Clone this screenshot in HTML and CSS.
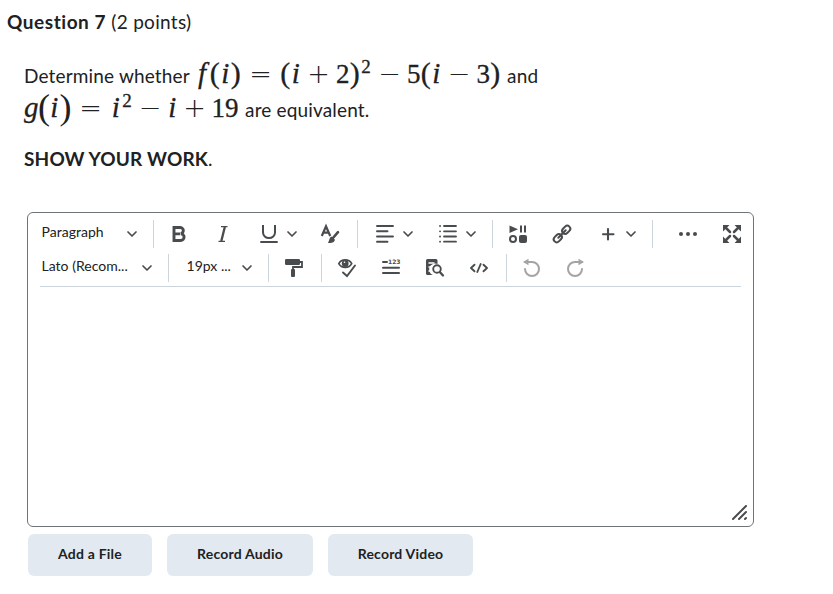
FILE: index.html
```html
<!DOCTYPE html>
<html lang="en">
<head>
	<meta charset="UTF-8">
	<title>Question 7</title>
	<meta name="viewport" content="width=device-width,initial-scale=1">
	<link rel="stylesheet" href="styles.css">
</head>
<body>
	<!-- shared chevron -->
	<svg class="defs" width="0" height="0">
		<symbol id="chev" viewBox="0 0 12 12"><path d="M2 4l4 4 4-4" fill="none" stroke="#494c4e" stroke-width="1.7" stroke-linecap="round" stroke-linejoin="round"/></symbol>
	</svg>
	<h2 class="title"><b>Question 7</b> (2 points)</h2>
	<div class="question">
		<div class="line">Determine whether <span class="math"><i class="fn">f</i><span class="p">(</span><i>i</i><span class="p">)</span><span class="op first">=</span><span class="p">(</span><i>i</i><span class="op">+</span><span class="n">2</span><span class="p">)</span><sup>2</sup><span class="op">−</span><span class="n">5</span><span class="p">(</span><i>i</i><span class="op">−</span><span class="n">3</span><span class="p">)</span></span> and</div>
		<div class="line"><span class="math"><i class="g">g</i><span class="p big">(</span><i>i</i><span class="p big">)</span><span class="op wide">=</span><i>i</i><sup>2</sup><span class="op">−</span><i>i</i><span class="op">+</span><span class="n">1</span><span class="n">9</span></span> are equivalent.</div>
		<p class="work"><b>SHOW YOUR WORK</b>.</p>
	</div>

	<div class="editor">
		<div class="toolbar">
			<div class="row">
				<div class="select para"><span>Paragraph</span><svg class="chev"><use href="#chev"/></svg></div>
				<div class="sep"></div>
				<div class="tool"><svg viewBox="0 0 18 18"><path d="M4 2.500h5.700a2.900 2.900 0 0 1 1 6.200A3.200 3.200 0 0 1 10.700 15.500H4zM5 8.900h5" fill="none" stroke="#494c4e" stroke-width="2.900"/></svg></div>
				<div class="tool"><svg viewBox="0 0 18 18"><path d="M7 1.700h6.500M4.500 16.300H11" fill="none" stroke="#494c4e" stroke-width="1.300"/><path d="M10.800 2L7.300 16" stroke="#494c4e" stroke-width="2.300"/></svg></div>
				<div class="tool split"><svg viewBox="0 0 18 18"><path d="M3 0v7.500a6 5.500 0 0 0 12 0V0" fill="none" stroke="#494c4e" stroke-width="2"/><path d="M1 17h16" stroke="#494c4e" stroke-width="1.900" stroke-linecap="round"/></svg><svg class="chev"><use href="#chev"/></svg></div>
				<div class="tool"><svg viewBox="0 0 18 18"><path d="M.8 11L5 1.200 9.200 11M2.300 7.700h5.400" fill="none" stroke="#494c4e" stroke-width="2.200"/><path d="M17 7.200L11.500 13.500" stroke="#494c4e" stroke-width="2.600" stroke-linecap="round"/><path d="M10.300 11.500l3.700 3.300c-.8 3.200-4 3.700-7.200 3 1.500-1 1.200-5 3.500-6.300z" fill="#494c4e"/></svg></div>
				<div class="sep"></div>
				<div class="tool split"><svg viewBox="0 0 18 18"><path d="M1 1h16M1 6.300h10.500M1 11.500h16M1 16.700h10.500" stroke="#494c4e" stroke-width="1.900" stroke-linecap="round"/></svg><svg class="chev"><use href="#chev"/></svg></div>
				<div class="tool split"><svg viewBox="0 0 18 18"><path d="M5 1h12M5 6.300h12M5 11.500h12M5 16.700h12M1 1h.1M1 6.300h.1M1 11.500h.1M1 16.700h.1" stroke="#494c4e" stroke-width="1.800" stroke-linecap="round"/></svg><svg class="chev"><use href="#chev"/></svg></div>
				<div class="sep"></div>
				<div class="tool"><svg viewBox="0 0 18 18"><path d="M.5.500L9 4.300.5 8zM11 .5h2v7h-2zM15 .5h2v7h-2z" fill="#494c4e"/><rect x="10" y="10" width="8" height="8" rx="2" fill="#494c4e"/><circle cx="4" cy="14" r="3" fill="none" stroke="#494c4e" stroke-width="2"/></svg></div>
				<div class="tool"><svg viewBox="0 0 18 18"><g fill="none" stroke="#494c4e" stroke-width="2"><rect x="-4.500" y="-3" width="9" height="6" rx="3" transform="translate(13.200 4.800) rotate(-45)"/><rect x="-4.500" y="-3" width="9" height="6" rx="3" transform="translate(4.800 13.200) rotate(-45)"/><path d="M5.300 12.700l7.400-7.400" stroke-linecap="round"/></g></svg></div>
				<div class="tool split"><svg viewBox="0 0 18 18"><path d="M9 4v10.500M4 9.200h10.500" stroke="#494c4e" stroke-width="2.100" stroke-linecap="round"/></svg><svg class="chev"><use href="#chev"/></svg></div>
				<div class="sep"></div>
				<div class="tool more"><svg viewBox="0 0 18 18"><g fill="#494c4e"><circle cx="2" cy="9" r="2"/><circle cx="9" cy="9" r="2"/><circle cx="16" cy="9" r="2"/></g></svg></div>
				<div class="tool"><svg viewBox="0 0 18 18"><path d="M0 0h6.500L0 6.500zM18 0v6.500L11.500 0zM0 18v-6.500L6.500 18zM18 18h-6.500L18 11.500z" fill="#494c4e"/><path d="M2 2l5 5M16 2l-5 5M2 16l5-5M16 16l-5-5" stroke="#494c4e" stroke-width="2.500" stroke-linecap="round"/></svg></div>
			</div>
			<div class="row">
				<div class="select font"><span>Lato (Recom...</span><svg class="chev"><use href="#chev"/></svg></div>
				<div class="sep"></div>
				<div class="select size"><span>19px ...</span><svg class="chev"><use href="#chev"/></svg></div>
				<div class="sep"></div>
				<div class="tool"><svg viewBox="0 0 18 18"><rect y="0" width="15" height="6" rx="1.200" fill="#494c4e"/><path d="M15 3h2v5H8v3" fill="none" stroke="#494c4e" stroke-width="1.800"/><rect x="6" y="10" width="4" height="8" rx="1" fill="#494c4e"/></svg></div>
				<div class="sep"></div>
				<div class="tool"><svg viewBox="0 0 18 18"><path d="M.8 4.700C3.500-.3 11-.3 13.700 4.700 11 9.700 3.500 9.700.8 4.700z" fill="none" stroke="#494c4e" stroke-width="1.700"/><circle cx="7.200" cy="4.500" r="3.400" fill="#494c4e"/><circle cx="6.500" cy="3.300" r=".8" fill="#fff"/><path d="M5 13.500l4 3.500 8-10.500" fill="none" stroke="#494c4e" stroke-width="1.900" stroke-linecap="round"/></svg></div>
				<div class="tool"><svg viewBox="0 0 18 18"><path d="M1 3h4M1 8.700h16M1 14h16" stroke="#494c4e" stroke-width="2" stroke-linecap="round"/><text x="6" y="5" class="digits">123</text></svg></div>
				<div class="tool"><svg viewBox="0 0 18 18"><path d="M1.500 0h8.500a1.500 1.500 0 0 1 1.500 1.500V5a5.500 5.500 0 0 0-4.800 11H1.500A1.500 1.500 0 0 1 0 14.500v-13A1.500 1.500 0 0 1 1.500 0z" fill="#494c4e"/><path d="M2.500 4h6M2.500 8h3M2.500 12h3" stroke="#fff" stroke-width="1.500"/><circle cx="11" cy="10" r="3.800" fill="#fff" stroke="#494c4e" stroke-width="1.900"/><path d="M13.800 13L17 16.500" stroke="#494c4e" stroke-width="2.300" stroke-linecap="round"/></svg></div>
				<div class="tool"><svg viewBox="0 0 18 18"><path d="M4.500 5.700L1 9l3.500 3.300M13.500 5.700L17 9l-3.500 3.300M10.700 5L7.300 13" fill="none" stroke="#494c4e" stroke-width="1.900" stroke-linecap="round" stroke-linejoin="round"/></svg></div>
				<div class="sep"></div>
				<div class="tool off"><svg viewBox="0 0 18 18"><path d="M2 3h7a7 7 0 1 1-7 7" fill="none" stroke="#494c4e" stroke-width="2" stroke-linecap="round"/><path d="M0 3l5.500-3.200v6.400z" fill="#494c4e"/></svg></div>
				<div class="tool off redo"><svg viewBox="0 0 18 18"><path d="M16 3H9a7 7 0 1 0 7 7" fill="none" stroke="#494c4e" stroke-width="2" stroke-linecap="round"/><path d="M18 3l-5.500-3.200v6.400z" fill="#494c4e"/></svg></div>
			</div>
		</div>
		<div class="content"></div>
		<svg class="grip" viewBox="0 0 16 16"><path d="M1 15L14 2M7 15l7-7M13 15l1-1" stroke="#494c4e" stroke-width="2" stroke-linecap="round"/></svg>
	</div>

	<div class="buttons">
		<button class="file">Add a File</button>
		<button class="audio">Record Audio</button>
		<button class="video">Record Video</button>
	</div>
</body>
</html>
```
FILE: styles.css
```css
*{box-sizing: border-box;}
body{margin: 0;background: #fff;color: #202122;font-family: Lato, "Liberation Sans", sans-serif;font-size: 19px;}
.defs{display: block;}
.title{margin: 0;padding: 8px 0 0 7px;font-size: 19px;font-weight: 400;line-height: 28px;height: 58px;letter-spacing: .3px;}
.title b{letter-spacing: .55px;}
.question{padding-left: 24px;height: 154px;letter-spacing: .16px;}
.line{height: 34px;line-height: 36px;white-space: nowrap;}
.work{margin: 0;padding-top: 19px;line-height: 28px;}

/* formulas */
.math{margin-right: 1.5px;font-family: "Liberation Serif", serif;font-size: 27px;line-height: 1px;letter-spacing: 0;-webkit-text-stroke: .3px #202122;}
.math i,.math span,.math sup{display: inline-block;text-align: center;}
.math i{width: 10.5px;font-size: 29px;}
.math .fn{width: 15px;}
.math .g{width: 14px;}
.math .p{width: 10.5px;font-size: 30px;}
.math .big{width: 11px;font-size: 36px;vertical-align: -2px;-webkit-text-stroke: 0;}
.math .n{width: 13.5px;}
.math .op{width: 35px;font-family: "DejaVu Sans", sans-serif;font-weight: 200;font-size: 27px;-webkit-text-stroke: 0;}
.math .first{width: 39px;}
.math .wide{width: 40px;}
.math sup{width: 12px;font-size: 19px;vertical-align: 10px;}
.line + .line .op:not(.wide){width: 34px;}

/* editor */
.editor{position: relative;margin-left: 27px;width: 727px;height: 315px;border: 1px solid #6e7477;border-radius: 6px;}
.toolbar{margin: 0 12px;padding: 7px 0 4px;border-bottom: 1px solid #cdd5dc;display: flex;flex-direction: column;gap: 6px;}
.row{display: flex;align-items: center;height: 28px;}
.row svg{display: block;width: 18px;height: 18px;overflow: visible;flex: none;}
.row .chev{width: 12px;height: 12px;}
.sep{width: 1px;height: 28px;background: #cdd5dc;margin: 0 3px 0 5px;flex: none;}
.tool{padding: 0 13px;flex: none;}
.split{display: flex;align-items: center;gap: 8px;padding: 0 10px 0 15px;}
.more{margin-left: 10px;}
.off{opacity: .5;}
.redo{margin-left: -1px;}
.select{display: flex;align-items: center;justify-content: space-between;padding: 0 10px 0 1.5px;font-size: 14px;letter-spacing: .02px;white-space: nowrap;flex: none;}
.select span{padding-bottom: 5px;}
.para{width: 108px;}
.font{width: 123px;}
.size{width: 91px;padding-left: 14.5px;}
.digits{font: bold 6px "DejaVu Sans", sans-serif;fill: #494c4e;}
.grip{position: absolute;right: 5px;bottom: 6px;width: 16px;height: 16px;}

.buttons{display: flex;gap: 15px;padding: 7px 0 0 28px;}
.buttons button{height: 42px;border: 0;border-radius: 6px;padding: 0 0 3px;background: #e3e9f1;color: #202122;font-family: Lato, sans-serif;font-size: 14px;font-weight: 700;letter-spacing: .2px;}
.file{width: 124px;}
.audio{width: 146px;}
.video{width: 145px;}
```
